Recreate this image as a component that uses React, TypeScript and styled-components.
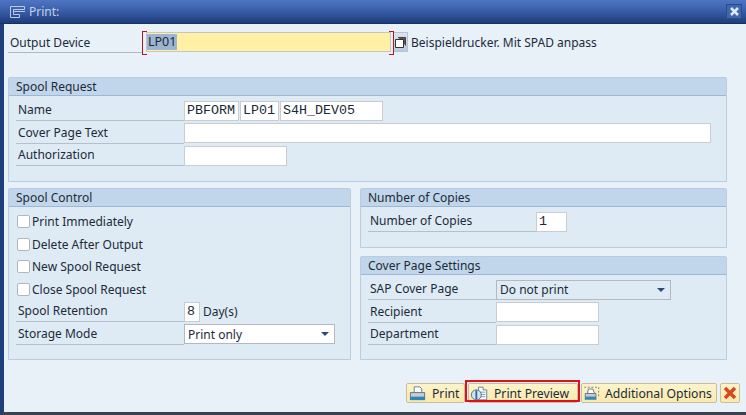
import React from "react";
import styled, { createGlobalStyle } from "styled-components";

const GlobalStyle = createGlobalStyle`
html, body {
    margin: 0;
    padding: 0;
    width: 746px;
    height: 415px;
    overflow: hidden;
}
body {
    font-family: "Noto Sans", "Liberation Sans", sans-serif;
    font-size: 12px;
    color: #1c2a38;
}
`;

const Dialog = styled.div`
width: 746px;
height: 415px;
display: flex;
flex-direction: column;
background: #e8f0f8;
box-sizing: border-box;
border-left: 4px solid #1f3f7c;
border-bottom: 3px solid #3a4250;
`;

const TitleBar = styled.div`
height: 24px;
box-sizing: border-box;
margin-left: -4px;
padding: 0 4px 0 10px;
display: flex;
align-items: center;
gap: 3px;
color: #c3d2ea;
font-size: 12px;
background: linear-gradient(#4f74c2, #3d62ad 40%, #1e3c7c);
border-bottom: 1px solid #16305f;
.title { flex: 1; }
`;

const CloseButton = styled.div`
width: 16px;
height: 15px;
display: flex;
align-items: center;
justify-content: center;
background: #3f67ae;
border: 1px solid #2a4c8c;
box-sizing: border-box;
`;

const Content = styled.div`
flex: 1;
padding: 8px 19px 0 4px;
`;

const DeviceRow = styled.div`
display: flex;
align-items: flex-start;
height: 20px;
margin-bottom: 25px;
`;

const DeviceLabel = styled.div`
width: 134px;
height: 21px;
line-height: 21px;
padding-left: 2px;
box-sizing: border-box;
border-bottom: 1px solid #aeb8c4;
margin-right: 4px;
`;

const DeviceField = styled.div`
position: relative;
width: 245px;
height: 20px;
box-sizing: border-box;
padding: 1px 0;
background: #fff0a4;
border: 1px solid #c3c7bf;
font-size: 12.5px;
line-height: 16px;
span { display: inline-block; background: #9db5d0; padding: 0 1px; }
`;

const Bracket = styled.i<{ $side: "left" | "right" }>`
position: absolute;
top: -2px;
bottom: -4px;
width: 4px;
border: 1px solid #c4101c;
${(p) => (p.$side === "left" ? "left: -5px; border-right: 0;" : "right: -4px; border-left: 0;")}
background: transparent;
`;

const CopyButton = styled.div`
width: 15px;
height: 20px;
margin-left: 2px;
display: flex;
align-items: center;
justify-content: center;
background: linear-gradient(#dbe4ee, #b9cbe0);
border: 1px solid #b8c2ce;
box-sizing: border-box;
`;

const DeviceText = styled.div`
margin-left: 3px;
line-height: 21px;
`;

const Group = styled.section<{ $h: number }>`
height: ${(p) => p.$h}px;
box-sizing: border-box;
background: #deeaf4;
border: 1px solid #b8cde2;
border-radius: 2px 2px 0 0;
`;

const GroupHead = styled.div`
height: 18px;
box-sizing: border-box;
line-height: 17px;
padding-left: 7px;
background: #c1d6ea;
border-bottom: 1px solid #9db8d5;
`;

const GroupBody = styled.div`
padding: 3.3px 8px 0 7px;
display: flex;
flex-direction: column;
`;

const Row = styled.div`
display: flex;
align-items: center;
height: 22.5px;
`;

const Label = styled.div<{ $w: number }>`
width: ${(p) => p.$w}px;
height: 21px;
line-height: 20px;
box-sizing: border-box;
padding-left: 2px;
border-bottom: 1px solid #b4c0cc;
`;

const Field = styled.div<{ $w: number }>`
width: ${(p) => p.$w}px;
height: 20px;
box-sizing: border-box;
margin-right: 1px;
padding: 0 2px;
background: #fff;
border: 1px solid #c9cdd2;
font-family: "Liberation Mono", monospace;
font-size: 13.33px;
line-height: 18px;
white-space: nowrap;
`;

const Unit = styled.span`
margin-left: 2px;
`;

const Select = styled.div<{ $w: number; $readonly?: boolean }>`
width: ${(p) => p.$w}px;
height: 20px;
box-sizing: border-box;
display: flex;
align-items: center;
justify-content: space-between;
padding: 0 5px 0 3px;
background: ${(p) => (p.$readonly ? "#deeaf4" : "#fff")};
border: 1px solid #b3b9bf;
`;

const Arrow = styled.i`
width: 0;
height: 0;
border-left: 4px solid transparent;
border-right: 4px solid transparent;
border-top: 4px solid #2c4a78;
`;

const CheckRow = styled.label`
display: flex;
align-items: center;
height: 22.5px;
gap: 2px;
padding-left: 1px;
`;

const CheckBox = styled.i`
width: 13px;
height: 13px;
box-sizing: border-box;
background: #fff;
border: 1px solid #b0b7be;
border-radius: 2px;
`;

const Columns = styled.div`
display: grid;
grid-template-columns: 343px 367px;
gap: 9px;
margin-top: 6px;
`;

const RightColumn = styled.div`
display: flex;
flex-direction: column;
gap: 8px;
`;

const Footer = styled.div`
height: 36px;
display: flex;
justify-content: flex-end;
align-items: flex-start;
padding: 7px 6px 0 0;
gap: 3px;
box-sizing: border-box;
`;

const Action = styled.div<{ $w: number; $active?: boolean }>`
position: relative;
width: ${(p) => p.$w}px;
height: 20px;
box-sizing: border-box;
display: flex;
align-items: center;
gap: 5px;
padding-left: 1px;
font-size: 12.2px;
white-space: nowrap;
background: linear-gradient(#fdf4cb, #f8e9ae);
border: 1px solid #c9bf9a;
border-radius: 2px;
${(p) =>
  p.$active &&
  `&::after {
    content: "";
    position: absolute;
    left: -4px;
    right: -3px;
    top: -4px;
    bottom: 0;
    border: 2px solid #e2101c;
  }`}
`;

const CancelAction = styled(Action)`
justify-content: center;
padding-left: 0;
`;

const PrintIcon = () => (
  <svg width="19" height="17" viewBox="0 0 20 17">
    <path d="M6.500 1.500h6l2 2v5h-8z" fill="#fff" stroke="#6d7e90" />
    <path d="M2.500 7.500h15v5h-15z" fill="#c3ccd6" stroke="#5f7387" />
    <path d="M2 12h16v3.500H2z" fill="#2e86b8" />
  </svg>
);

const PreviewIcon = () => (
  <svg width="19" height="17" viewBox="0 0 21 17">
    <path d="M9.500 1.500h5v3h4v11h-9z" fill="#fff" stroke="#557a9f" />
    <path d="M11 7h6M11 9.500h6M11 12h6" stroke="#6f93b5" />
    <circle cx="7" cy="10" r="5.500" fill="#d8e2ec" stroke="#4d6a88" />
    <path d="M7 5v10" stroke="#1e6fa8" strokeWidth="2" />
  </svg>
);

const OptionsIcon = () => (
  <svg width="17" height="17" viewBox="0 0 19 17">
    <path d="M1.500 1.500h16v11" fill="none" stroke="#6a7480" strokeDasharray="2 2" />
    <path d="M6 3.500h5l2 5H5z" fill="#fff" stroke="#5e6a76" />
    <path d="M2.500 8.500h12v4h-12z" fill="#c3ccd6" stroke="#5f7387" />
    <path d="M2 12.500h13v3H2z" fill="#2e86b8" />
  </svg>
);

const App = () => (
  <>
    <GlobalStyle />
    <Dialog>
      <TitleBar>
        <svg width="16" height="12" viewBox="0 0 16 12">
          <path d="M.5.5h14v3h-11v5h6v3h-9z" fill="none" stroke="#b9cbe8" />
          <path d="M4 5.500h11" stroke="#b9cbe8" />
        </svg>
        <span className="title">Print:</span>
        <CloseButton>
          <svg width="11" height="11" viewBox="0 0 11 11">
            <path d="M2 2l7 7M9 2l-7 7" stroke="#dfe9f7" strokeWidth="2.500" />
          </svg>
        </CloseButton>
      </TitleBar>
      <Content>
        <DeviceRow>
          <DeviceLabel>Output Device</DeviceLabel>
          <DeviceField>
            <Bracket $side="left" />
            <span>LP01</span>
            <Bracket $side="right" />
          </DeviceField>
          <CopyButton>
            <svg width="13" height="13" viewBox="0 0 13 13">
              <path d="M4 1.500h7.500v8" fill="#555" stroke="#444" />
              <path d="M1.500 3.500h8v8h-8z" fill="#fff" stroke="#333" />
            </svg>
          </CopyButton>
          <DeviceText>Beispieldrucker. Mit SPAD anpass</DeviceText>
        </DeviceRow>

        <Group $h={105}>
          <GroupHead>Spool Request</GroupHead>
          <GroupBody>
            <Row>
              <Label $w={168}>Name</Label>
              <Field $w={55}>PBFORM</Field>
              <Field $w={39}>LP01</Field>
              <Field $w={103}>S4H_DEV05</Field>
            </Row>
            <Row>
              <Label $w={168}>Cover Page Text</Label>
              <Field $w={527} />
            </Row>
            <Row>
              <Label $w={168}>Authorization</Label>
              <Field $w={103} />
            </Row>
          </GroupBody>
        </Group>

        <Columns>
          <Group $h={172}>
            <GroupHead>Spool Control</GroupHead>
            <GroupBody>
              <CheckRow><CheckBox />Print Immediately</CheckRow>
              <CheckRow><CheckBox />Delete After Output</CheckRow>
              <CheckRow><CheckBox />New Spool Request</CheckRow>
              <CheckRow><CheckBox />Close Spool Request</CheckRow>
              <Row>
                <Label $w={168}>Spool Retention</Label>
                <Field $w={16}>8</Field>
                <Unit>Day(s)</Unit>
              </Row>
              <Row>
                <Label $w={168}>Storage Mode</Label>
                <Select $w={151}>Print only<Arrow /></Select>
              </Row>
            </GroupBody>
          </Group>
          <RightColumn>
            <Group $h={60}>
              <GroupHead>Number of Copies</GroupHead>
              <GroupBody>
                <Row>
                  <Label $w={168}>Number of Copies</Label>
                  <Field $w={31}>1</Field>
                </Row>
              </GroupBody>
            </Group>
            <Group $h={104}>
              <GroupHead>Cover Page Settings</GroupHead>
              <GroupBody>
                <Row>
                  <Label $w={128}>SAP Cover Page</Label>
                  <Select $w={175} $readonly>Do not print<Arrow /></Select>
                </Row>
                <Row>
                  <Label $w={128}>Recipient</Label>
                  <Field $w={103} />
                </Row>
                <Row>
                  <Label $w={128}>Department</Label>
                  <Field $w={103} />
                </Row>
              </GroupBody>
            </Group>
          </RightColumn>
        </Columns>
      </Content>
      <Footer>
        <Action $w={59}><PrintIcon />Print</Action>
        <Action $w={110} $active><PreviewIcon />Print Preview</Action>
        <Action $w={136}><OptionsIcon />Additional Options</Action>
        <CancelAction $w={20}>
          <svg width="14" height="14" viewBox="0 0 14 14">
            <path d="M2 2l10 10M12 2L2 12" stroke="#d9481c" strokeWidth="3.500" />
          </svg>
        </CancelAction>
      </Footer>
    </Dialog>
  </>
);

export default App;
